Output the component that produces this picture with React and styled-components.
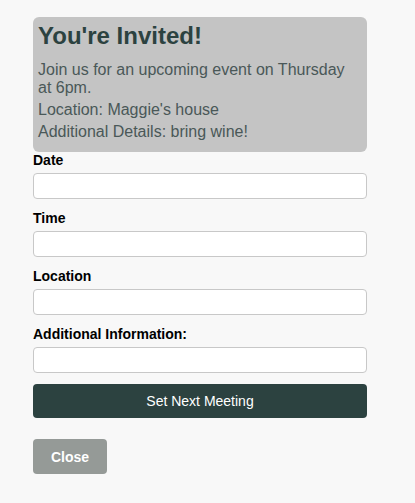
import React from "react";
import styled, { createGlobalStyle } from "styled-components";

const GlobalStyle = createGlobalStyle`
  html, body {
    margin: 0;
    background: #f8f8f8;
    font-family: "Liberation Sans", Arial, sans-serif;
  }
`;

const Page = styled.div`
  padding: 17px 48px 20px 33px;
  width: 334px;
`;

const Card = styled.div`
  background: #c4c4c4;
  border-radius: 6px;
  padding: 5px 5px 7px;
`;

const Title = styled.h1`
  margin: 0 0 11px;
  font-size: 24px;
  line-height: 28px;
  color: #2c4240;
`;

const Text = styled.p`
  margin: 0 0 4px;
  font-size: 16px;
  line-height: 18px;
  color: #4a5858;
`;

const Form = styled.form`
  display: flex;
  flex-direction: column;
`;

const Label = styled.label`
  display: block;
  font-size: 14px;
  line-height: 16px;
  font-weight: bold;
  color: #000;
  margin: ${(p) => (p.$first ? "0" : "11px")} 0 5px;
`;

const Input = styled.input`
  display: block;
  box-sizing: border-box;
  width: 100%;
  height: 26px;
  border: 1px solid #c8c8c8;
  border-radius: 4px;
  background: #fff;
  font-family: inherit;
  font-size: 14px;
  padding: 0 6px;
  &:focus {
    outline: none;
  }
`;

const Button = styled.button`
  display: block;
  box-sizing: border-box;
  border: none;
  border-radius: 4px;
  color: #fff;
  font-family: inherit;
  font-size: 14px;
  cursor: pointer;
  background: ${(p) => (p.$muted ? "#959a97" : "#2c4240")};
  width: ${(p) => (p.$muted ? "74px" : "100%")};
  height: ${(p) => (p.$muted ? "35px" : "34px")};
  font-weight: ${(p) => (p.$muted ? "bold" : "normal")};
  margin-top: ${(p) => (p.$muted ? "21px" : "11px")};
`;

const fields = ["Date", "Time", "Location", "Additional Information:"];

export default function App() {
  return (
    <>
      <GlobalStyle />
      <Page>
        <Card>
          <Title>You're Invited!</Title>
          <Text>Join us for an upcoming event on Thursday at 6pm.</Text>
          <Text>Location: Maggie's house</Text>
          <Text>Additional Details: bring wine!</Text>
        </Card>
        <Form onSubmit={(e) => e.preventDefault()}>
          {fields.map((f, i) => (
            <div key={f}>
              <Label $first={i === 0} htmlFor={`f${i}`}>
                {f}
              </Label>
              <Input id={`f${i}`} type="text" />
            </div>
          ))}
          <Button type="submit">Set Next Meeting</Button>
        </Form>
        <Button type="button" $muted>
          Close
        </Button>
      </Page>
    </>
  );
}
